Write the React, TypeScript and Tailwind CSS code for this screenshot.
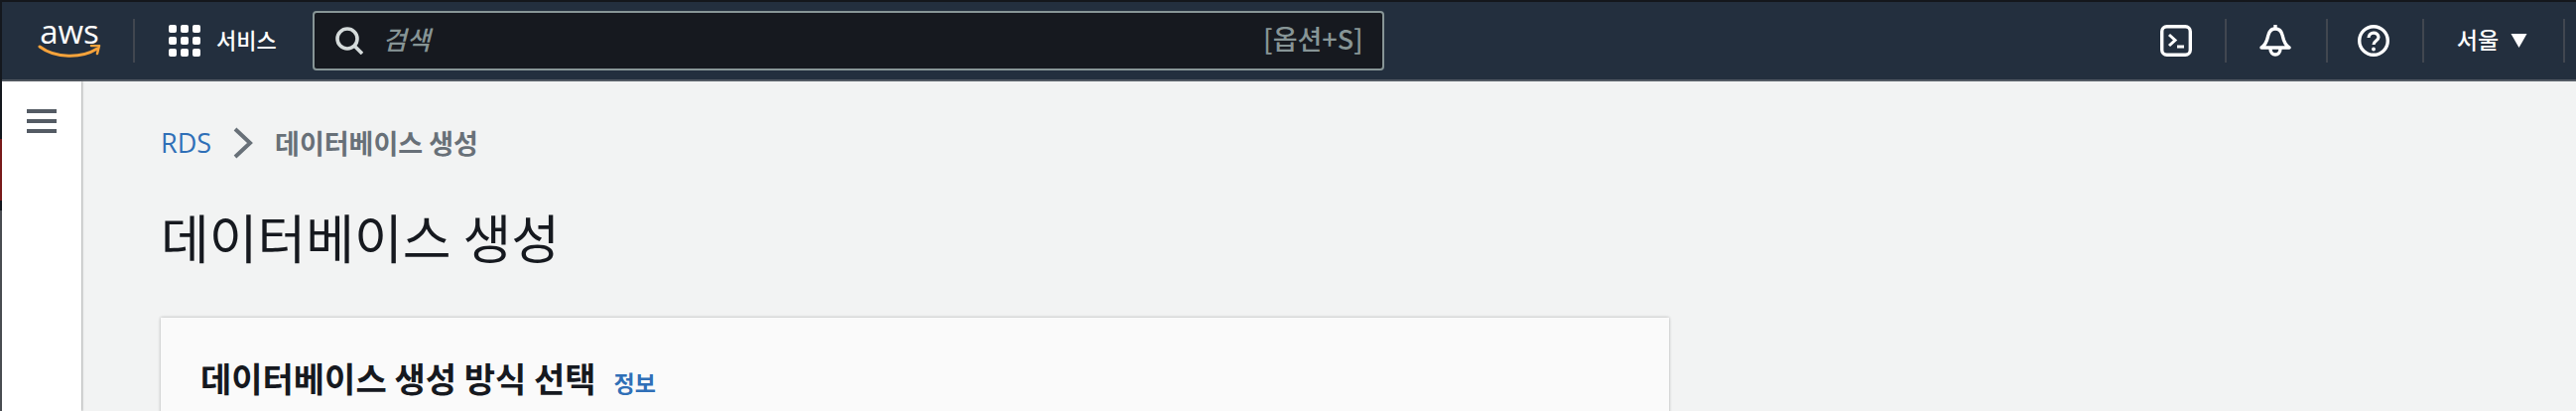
const font = { fontFamily: '"Noto Sans CJK KR", "Open Sans", sans-serif' };
const latin = { fontFamily: '"Open Sans", sans-serif' };

function Divider({ h = 44 }: { h?: number }) {
  return <div className="w-[2px] bg-[#414750]" style={{ height: h }} />;
}

export default function App() {
  return (
    <div className="w-[2596px] h-[414px] overflow-hidden flex bg-[#f2f3f3]" style={font}>
      <div className="w-[2px] h-full bg-[#4a4d52] shrink-0 flex flex-col">
        <div className="h-[140px] bg-[#14181e]" />
        <div className="h-[62px] bg-[#7a1a1a]" />
        <div className="h-[10px] bg-[#14181e]" />
      </div>
      <div className="flex-1 min-w-0 flex flex-col">
        <header className="h-[82px] shrink-0 flex items-center bg-[#232f3e] border-t-[2px] border-t-[#14171c] border-b-[2px] border-b-[#545b64]">
          <div className="ml-[36px] mb-[4px] w-[64px] h-[40px] flex flex-col items-center">
            <span className="text-[33px] leading-[26px] h-[26px] text-white" style={latin}>aws</span>
            <svg viewBox="0 0 64 14" className="w-[64px] h-[14px]" fill="none">
              <path d="M2 2 C 18 14, 44 14, 60 4" stroke="#f7a33b" strokeWidth="3" strokeLinecap="round" />
              <path d="M54 1 L62 1 L60 9" stroke="#f7a33b" strokeWidth="2.5" strokeLinecap="round" strokeLinejoin="round" />
            </svg>
          </div>
          <div className="ml-[32px]"><Divider /></div>
          <div className="ml-[34px] grid grid-cols-3 gap-[4px] w-[32px]">
            {Array.from({ length: 9 }).map((_, i) => (
              <div key={i} className="w-[8px] h-[8px] rounded-[2px] bg-white" />
            ))}
          </div>
          <span className="ml-[16px] pb-[4px] text-[22px] font-medium text-white">서비스</span>
          <div className="ml-[36px] w-[1080px] h-[60px] flex items-center rounded-[4px] border-[2px] border-[#879596] bg-[#16191f]">
            <svg viewBox="0 0 28 28" className="w-[28px] h-[28px] ml-[21px]" fill="none" stroke="#d5dbdb" strokeWidth="3.6">
              <circle cx="12" cy="12" r="10" />
              <path d="M19 19 L27 27" />
            </svg>
            <span className="ml-[20px] pb-[5px] text-[26px] italic font-medium text-[#879596]">검색</span>
            <span className="ml-auto mr-[19px] pb-[4px] text-[27px] font-medium text-[#879596]">[옵션+S]</span>
          </div>
          <svg viewBox="0 0 32 32" className="ml-[782px] w-[32px] h-[32px]" fill="none" stroke="#fff" strokeWidth="3.4">
            <rect x="1.7" y="1.7" width="28.6" height="28.6" rx="5" />
            <path d="M9 10 L15 15.5 L9 21" strokeWidth="3" />
            <path d="M17 22 H24" strokeWidth="3" />
          </svg>
          <div className="ml-[33px]"><Divider /></div>
          <svg viewBox="0 0 32 34" className="ml-[33px] w-[32px] h-[34px]" fill="none" stroke="#fff" strokeWidth="3.4">
            <path d="M16 1 V5" />
            <path d="M2 24 C 8 20, 8 14, 9 11 C 10 7, 13 5, 16 5 C 19 5, 22 7, 23 11 C 24 14, 24 20, 30 24 Z" strokeLinejoin="round" />
            <path d="M11 25 C 11 33, 21 33, 21 25" />
          </svg>
          <div className="ml-[35px]"><Divider /></div>
          <svg viewBox="0 0 32 32" className="ml-[30px] w-[32px] h-[32px]" fill="none" stroke="#fff" strokeWidth="3.4">
            <circle cx="16" cy="16" r="14.3" />
            <path d="M11 13 C 11 6.5, 21 6.5, 21 12.5 C 21 16, 16 16, 16 20" strokeWidth="3.2" />
            <circle cx="16" cy="24.5" r="1.9" fill="#fff" stroke="none" />
          </svg>
          <div className="ml-[33px]"><Divider /></div>
          <span className="ml-[33px] pb-[4px] text-[23px] font-medium text-white">서울</span>
          <svg viewBox="0 0 16 14" className="ml-[12px] w-[17px] h-[14px]"><path d="M0 0 H16 L8 14 Z" fill="#fff" /></svg>
          <div className="ml-[36px]"><Divider /></div>
        </header>
        <div className="flex-1 min-h-0 flex">
          <aside className="w-[80px] shrink-0 bg-white shadow-[1px_0_2px_rgba(0,0,0,0.3)] pt-[28px] pl-[25px]">
            <div className="w-[30px] flex flex-col gap-[6px]">
              <div className="h-[4px] bg-[#545b64]" />
              <div className="h-[4px] bg-[#545b64]" />
              <div className="h-[4px] bg-[#545b64]" />
            </div>
          </aside>
          <main className="flex-1 pl-[80px] pt-[46px]">
            <nav className="flex items-center h-[32px]">
              <span className="text-[27px] text-[#2f6fb7]" style={latin}>RDS</span>
              <svg viewBox="0 0 20 32" className="ml-[22px] w-[20px] h-[32px]" fill="none" stroke="#687078" strokeWidth="4"><path d="M2 2 L17 16 L2 30" /></svg>
              <span className="ml-[22px] text-[27px] font-bold text-[#687078]">데이터베이스 생성</span>
            </nav>
            <h1 className="mt-[42px] text-[53px] leading-[72px] font-normal text-[#16191f]">데이터베이스 생성</h1>
            <section className="mt-[46px] w-[1520px] h-[200px] bg-[#fafafa] shadow-[0_0_3px_rgba(0,0,0,0.3)] pt-[37px] pl-[40px] flex items-start">
              <h2 className="text-[34px] leading-[48px] font-bold text-[#16191f]">데이터베이스 생성 방식 선택</h2>
              <span className="ml-[18px] mt-[12px] text-[23px] leading-[32px] font-bold text-[#2f6fb7]">정보</span>
            </section>
          </main>
        </div>
      </div>
    </div>
  );
}
